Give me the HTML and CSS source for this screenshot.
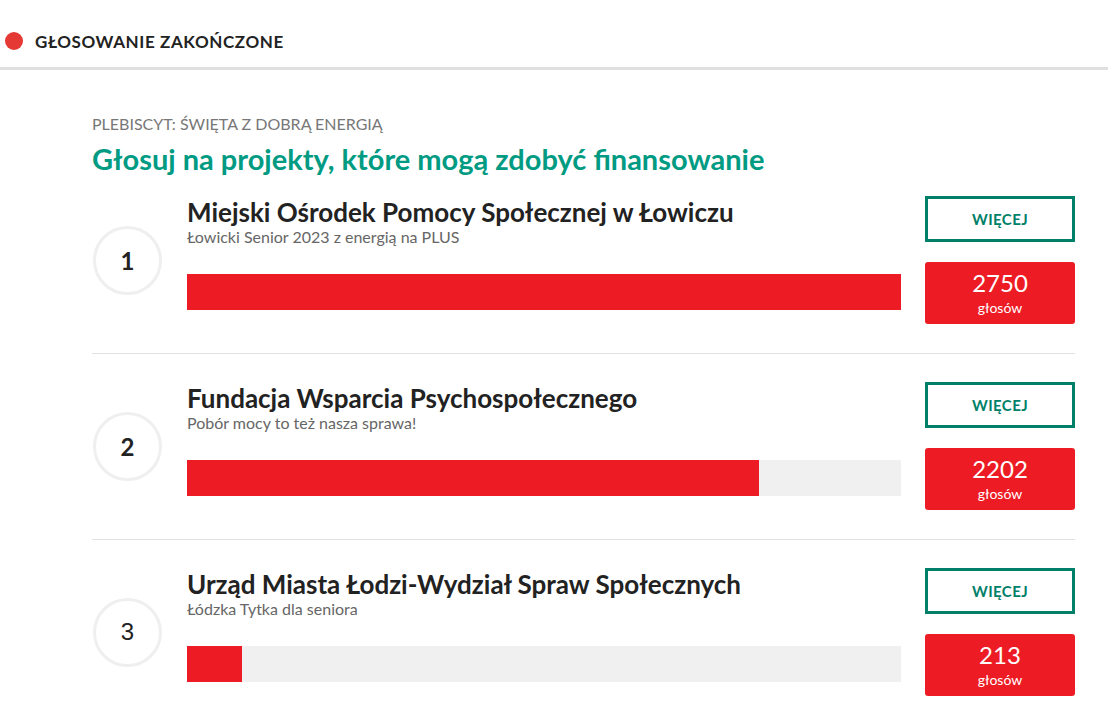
FILE: index.html
```html
<!DOCTYPE html>
<html lang="pl">
<head>
<meta charset="utf-8">
<title>Głosowanie zakończone</title>
<link rel="stylesheet" href="styles.css">
</head>
<body>
<header class="status">
  <span class="status-dot"></span>
  <span class="status-text">GŁOSOWANIE ZAKOŃCZONE</span>
</header>
<main class="poll">
  <p class="poll-label">PLEBISCYT: ŚWIĘTA Z DOBRĄ ENERGIĄ</p>
  <h1 class="poll-title">Głosuj na projekty, które mogą zdobyć finansowanie</h1>
  <ol class="entries">
    <li class="entry">
      <div class="rank"><span class="rank-circle">1</span></div>
      <div class="entry-body">
        <h2 class="entry-name">Miejski Ośrodek Pomocy Społecznej w Łowiczu</h2>
        <p class="entry-project">Łowicki Senior 2023 z energią na PLUS</p>
        <div class="bar"><div class="bar-fill" style="width:100%"></div></div>
      </div>
      <div class="entry-side">
        <a class="more" href="#">WIĘCEJ</a>
        <div class="votes"><span class="votes-num">2750</span><span class="votes-label">głosów</span></div>
      </div>
    </li>
    <li class="entry">
      <div class="rank"><span class="rank-circle">2</span></div>
      <div class="entry-body">
        <h2 class="entry-name">Fundacja Wsparcia Psychospołecznego</h2>
        <p class="entry-project">Pobór mocy to też nasza sprawa!</p>
        <div class="bar"><div class="bar-fill" style="width:80.07%"></div></div>
      </div>
      <div class="entry-side">
        <a class="more" href="#">WIĘCEJ</a>
        <div class="votes"><span class="votes-num">2202</span><span class="votes-label">głosów</span></div>
      </div>
    </li>
    <li class="entry">
      <div class="rank"><span class="rank-circle rank-alt">3</span></div>
      <div class="entry-body">
        <h2 class="entry-name">Urząd Miasta Łodzi-Wydział Spraw Społecznych</h2>
        <p class="entry-project">Łódzka Tytka dla seniora</p>
        <div class="bar"><div class="bar-fill" style="width:7.75%"></div></div>
      </div>
      <div class="entry-side">
        <a class="more" href="#">WIĘCEJ</a>
        <div class="votes"><span class="votes-num">213</span><span class="votes-label">głosów</span></div>
      </div>
    </li>
  </ol>
</main>
</body>
</html>
```

FILE: styles.css
```css
* { box-sizing: border-box; }
html, body { margin: 0; padding: 0; background: #fff; }
body { font-family: Lato, "Noto Sans", sans-serif; color: #222; }

.status {
  height: 70px;
  border-bottom: 3px solid #e0e0e0;
  display: flex;
  align-items: center;
  gap: 12px;
  padding: 15px 0 0 5px;
}
.status-dot {
  width: 18px;
  height: 18px;
  border-radius: 50%;
  background: #e53935;
  flex: none;
}
.status-text {
  font-size: 17px;
  font-weight: 700;
  letter-spacing: 0.6px;
  color: #222;
}

.poll { padding: 44px 33px 0 92px; }
.poll-label {
  margin: 0;
  font-size: 16px;
  line-height: 19px;
  color: #777;
}
.poll-title {
  margin: 10px 0 0;
  font-size: 29px;
  line-height: 32px;
  font-weight: 700;
  color: #009b82;
}

.entries { list-style: none; margin: 0; padding: 0; }
.entry {
  display: grid;
  grid-template-columns: 95px 1fr 150px;
  column-gap: 24px;
  padding: 28px 0 29px;
  border-bottom: 1px solid #e2e2e2;
}
.entry:first-child { padding-top: 21px; }
.rank { display: flex; align-items: center; }
.rank-circle {
  width: 69px;
  height: 69px;
  border: 3px solid #efefef;
  border-radius: 50%;
  display: flex;
  align-items: center;
  justify-content: center;
  font-size: 24px;
  font-weight: 700;
  color: #222;
  margin-left: 1px;
}
.rank-alt { font-family: "Liberation Sans", Arial, sans-serif; font-weight: 400; }
.entry-body { margin-left: -24px; padding-top: 1px; }
.entry-name {
  margin: 0;
  font-size: 26px;
  line-height: 30px;
  font-weight: 700;
  color: #222;
}
.entry-project {
  margin: 0;
  font-size: 16px;
  line-height: 19px;
  color: #666;
}
.bar {
  margin-top: 28px;
  height: 36px;
  background: #f0f0f0;
}
.bar-fill { height: 100%; background: #ed1c24; }

.entry-side { display: flex; flex-direction: column; gap: 20px; }
.more {
  display: flex;
  align-items: center;
  justify-content: center;
  height: 46px;
  border: 3px solid #007f69;
  color: #007f69;
  font-size: 15px;
  font-weight: 700;
  letter-spacing: 0.4px;
  text-decoration: none;
}
.votes {
  height: 62px;
  background: #ed1c24;
  border-radius: 3px;
  color: #fff;
  display: flex;
  flex-direction: column;
  align-items: center;
  padding-top: 7px;
}
.votes-num { font-size: 24px; line-height: 28px; }
.votes-label { font-size: 14px; line-height: 17px; margin-top: 2px; }
```
